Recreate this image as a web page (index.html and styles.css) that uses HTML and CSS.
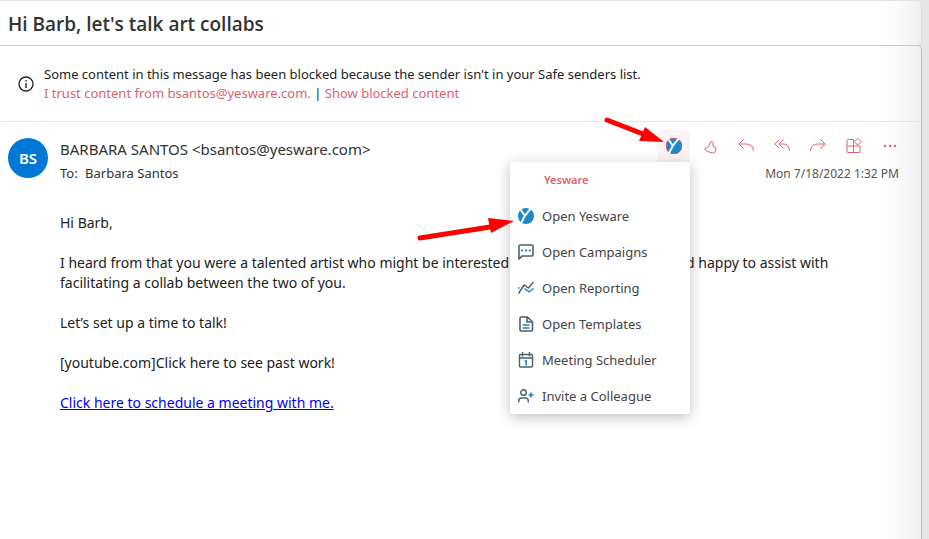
FILE: index.html
```html
<!DOCTYPE html>
<html lang="en">
<head>
    <meta charset="UTF-8">
    <meta name="viewport" content="width=device-width, initial-scale=1.0">
    <title>Hi Barb, let's talk art collabs</title>
    <link rel="stylesheet" href="styles.css">
</head>
<body>
    <svg class="sprite" aria-hidden="true">
        <symbol id="yesware" viewBox="0 0 16 16">
            <circle cx="8" cy="8" r="8" fill="#1c87c9"/>
            <path d="M2.8 2 L6.8 7.800 M12.6 0.6 L6.8 7.800 L3.2 15" fill="none" stroke="#fff" stroke-width="2"/>
        </symbol>
    </svg>

    <main class="reader">
        <header class="subject">
            <h1>Hi Barb, let's talk art collabs</h1>
        </header>

        <article class="message">
            <section class="notice">
                <svg class="info" viewBox="0 0 16 16" fill="none" stroke="#222">
                    <circle cx="8" cy="8" r="7" stroke-width="1.3"/>
                    <path d="M8 7v5M8 4v1.5" stroke-width="1.4"/>
                </svg>
                <div>
                    <p>Some content in this message has been blocked because the sender isn't in your Safe senders list.</p>
                    <p><a href="#trust">I trust content from bsantos@yesware.com.</a> | <a href="#show">Show blocked content</a></p>
                </div>
            </section>

            <section class="sender">
                <div class="avatar">BS</div>
                <div class="from">
                    <p class="name">BARBARA SANTOS &lt;bsantos@yesware.com&gt;</p>
                    <p class="to">To: <span>Barbara Santos</span></p>
                </div>
                <div class="meta">
                    <div class="toolbar">
                        <div class="addin">
                            <button class="tool active" aria-label="Yesware">
                                <svg viewBox="0 0 16 16"><use href="#yesware"/></svg>
                            </button>
                            <svg class="arrow arrow-top" viewBox="0 0 64 30">
                                <path d="M4 5 L40 19" stroke="#f00" stroke-width="5" stroke-linecap="round"/>
                                <path d="M42 12 L61 27 L36 26 Z" fill="#f00"/>
                            </svg>
                            <div class="menu">
                                <h2>Yesware</h2>
                                <button class="item">
                                    <svg viewBox="0 0 16 16"><use href="#yesware"/></svg>
                                    Open Yesware
                                </button>
                                <button class="item">
                                    <svg viewBox="0 0 16 16" fill="none" stroke="#4f5f66" stroke-width="1.6">
                                        <path d="M1 15V2q0-1 1-1h12q1 0 1 1v9q0 1-1 1H4z" stroke-linejoin="round"/>
                                        <path d="M3.2 6.5h2M7 6.5h2M10.8 6.5h2" stroke="#1c87d4" stroke-width="2"/>
                                    </svg>
                                    Open Campaigns
                                </button>
                                <button class="item">
                                    <svg viewBox="0 0 16 16" fill="none" stroke="#4f5f66" stroke-width="1.5">
                                        <path d="M0 8h1.5M3 8h1.5M6.5 8.5l4.5 3.3 4.5-3.3" stroke="#1c87d4"/>
                                        <path d="M.5 13.5L6 5l4.5 3L15.5 2"/>
                                    </svg>
                                    Open Reporting
                                </button>
                                <button class="item">
                                    <svg viewBox="0 0 16 16" fill="none" stroke="#4f5f66" stroke-width="1.6">
                                        <path d="M3 1h6.500l5 5v8q0 1-1 1H3q-1 0-1-1V2q0-1 1-1z" stroke-linejoin="round"/>
                                        <path d="M9 1v5h5"/>
                                        <path d="M4.500 9h7M4.500 12h7" stroke="#1c87d4"/>
                                    </svg>
                                    Open Templates
                                </button>
                                <button class="item">
                                    <svg viewBox="0 0 16 16" fill="none" stroke="#4f5f66" stroke-width="1.4">
                                        <rect x="1.500" y="2.500" width="13" height="12.500" rx="1"/>
                                        <path d="M1.500 6h13M4.500 0v4.500M11.500 0v4.500"/>
                                        <path d="M6.500 9h1.700v4.500" stroke="#1c87d4" stroke-width="1.600"/>
                                    </svg>
                                    Meeting Scheduler
                                </button>
                                <button class="item">
                                    <svg viewBox="0 0 16 16" fill="none" stroke="#4f5f66" stroke-width="1.4">
                                        <circle cx="5.500" cy="4.500" r="2.800"/>
                                        <path d="M.7 14.500v-1.500q0-3 3-3h3.600q3 0 3 3v1.500"/>
                                        <path d="M13 4.500v5M10.500 7h5" stroke="#1c87d4" stroke-width="1.600"/>
                                    </svg>
                                    Invite a Colleague
                                </button>
                                <svg class="arrow arrow-item" viewBox="0 0 100 28">
                                    <path d="M4 23 L74 12" stroke="#f00" stroke-width="5" stroke-linecap="round"/>
                                    <path d="M72 3 L98 6 L75 18 Z" fill="#f00"/>
                                </svg>
                            </div>
                        </div>
                        <button class="tool" aria-label="Like">
                            <svg viewBox="0 0 16 16">
                                <path d="M8.700 3.800q1.900-1 2.300.7v4l2 .3q1.200.3 1 1.500l-.9 3.400q-.5 1.600-2 1.400-4.400-.7-7.600-2.800-.9-.8-.5-1.900 2.200-.5 3.600-2.100 1.600-2.200 2.100-4.500z"/>
                            </svg>
                        </button>
                        <button class="tool" aria-label="Reply">
                            <svg viewBox="0 0 16 16"><path d="M5.500 1.500L1 6l4.500 4.500M1 6h7.500q6.500 0 7 7"/></svg>
                        </button>
                        <button class="tool" aria-label="Reply all">
                            <svg viewBox="0 0 16 16"><path d="M5.500 1.500L1 6l4.500 4.500M9.500 1.500L5 6l4.500 4.500M5 6h4.500q5.500 0 6 7"/></svg>
                        </button>
                        <button class="tool" aria-label="Forward">
                            <svg viewBox="0 0 16 16"><path d="M10.500 1.500L15 6l-4.500 4.500M15 6H7.500Q1 6 .5 13"/></svg>
                        </button>
                        <button class="tool" aria-label="Apps">
                            <svg viewBox="0 0 16 16"><path d="M7.500 1.500H2q-1 0-1 1v11q0 1 1 1h11q1 0 1-1V8H1M7.500 1.500v13M11.700.3l3.400 3.400-3.400 3.400-3.400-3.400z" stroke-linejoin="round"/></svg>
                        </button>
                        <button class="tool more" aria-label="More actions">
                            <svg viewBox="0 0 16 16"><circle cx="3" cy="8" r="1.200"/><circle cx="8" cy="8" r="1.200"/><circle cx="13" cy="8" r="1.200"/></svg>
                        </button>
                    </div>
                    <time datetime="2022-07-18T13:32">Mon 7/18/2022 1:32 PM</time>
                </div>
            </section>

            <section class="body">
                <p>Hi Barb,</p>
                <p>I heard from that you were a talented artist who might be interested<span class="gap"></span>d happy to assist with facilitating a collab between the two of you.</p>
                <p>Let’s set up a time to talk!</p>
                <p>[youtube.com]Click here to see past work!</p>
                <p><a href="#schedule">Click here to schedule a meeting with me.</a></p>
            </section>
        </article>
    </main>
</body>
</html>
```
FILE: styles.css
```css
* {
    box-sizing: border-box;
}
body {
    margin: 0;
    padding-right: 7px;
    background-color: #e6e6e6;
    color: #222;
    font-family: "Segoe UI", "Noto Sans", sans-serif;
    font-size: 13px;
}
h1, h2, p {
    margin: 0;
}
button {
    border: 0;
    padding: 0;
    background: none;
    font: inherit;
    color: inherit;
}
.sprite {
    display: none;
}
.reader {
    display: flex;
    flex-direction: column;
    min-height: 100vh;
}
.subject, .message {
    background: linear-gradient(to left, #efefef, #f9f9f9 20px, #fff 44px);
    border-right: 1px solid #bbb;
}
.subject {
    padding: 9px 8px 7px;
    border-top: 1px solid #e3e3e3;
    border-right-color: #ddd;
    border-bottom: 1px solid #c8c8c8;
    border-radius: 0 6px 4px 0;
}
.subject h1 {
    font-family: "Segoe UI", "Open Sans", sans-serif;
    font-size: 19px;
    font-weight: 600;
    line-height: 28px;
    color: #333;
}
.message {
    flex: 1;
    border-top-right-radius: 4px;
}

/* blocked content notice */
.notice {
    display: flex;
    align-items: center;
    gap: 10px;
    padding: 19px 18px 18px;
    border-bottom: 1px solid #e5e5e5;
    line-height: 19px;
}
.notice a {
    color: #dc626d;
    text-decoration: none;
}
.info {
    width: 16px;
    height: 16px;
}

/* sender row */
.sender {
    display: flex;
    padding: 8px 15px 0 8px;
}
.avatar {
    width: 40px;
    height: 40px;
    margin-top: 8px;
    border-radius: 50%;
    background-color: #0078d7;
    color: #fff;
    font-size: 15px;
    font-weight: 600;
    line-height: 40px;
    text-align: center;
}
.from {
    flex: 1;
    padding: 7px 0 0 12px;
    color: #333;
}
.name {
    font-size: 15px;
    line-height: 24px;
}
.to {
    font-size: 13px;
    line-height: 24px;
}
.to span {
    margin-left: 4px;
}
.meta time {
    display: block;
    padding-right: 7px;
    color: #555;
    font-size: 12px;
    line-height: 24px;
    text-align: right;
}
.toolbar {
    display: flex;
    gap: 4px;
}
.tool {
    display: flex;
    align-items: center;
    justify-content: center;
    width: 32px;
    height: 32px;
}
.tool svg {
    width: 16px;
    height: 16px;
    fill: none;
    stroke: #dc626d;
}
.tool.active {
    background-color: #fdf3f4;
}
.tool.more svg {
    fill: #dc626d;
    stroke: none;
}

/* add-in menu */
.addin {
    position: relative;
}
.menu {
    position: absolute;
    top: 32px;
    right: 0;
    width: 180px;
    background-color: #fff;
    border-radius: 2px;
    box-shadow: 0 3px 14px rgba(0, 0, 0, 0.25);
}
.menu h2 {
    padding-left: 34px;
    color: #dc626d;
    font-size: 11px;
    font-weight: 600;
    line-height: 36px;
}
.item {
    display: flex;
    align-items: center;
    gap: 8px;
    width: 100%;
    height: 36px;
    padding-left: 8px;
    color: #444;
}
.item svg {
    width: 16px;
    height: 16px;
}
.arrow {
    position: absolute;
    fill: none;
}
.arrow-top {
    top: -15px;
    left: -55px;
    width: 64px;
    height: 30px;
}
.arrow-item {
    top: 53px;
    left: -94px;
    width: 100px;
    height: 28px;
}

/* mail text */
.body {
    padding: 27px 60px;
    font-size: 14px;
    line-height: 20px;
}
.body p {
    margin-bottom: 20px;
}
.body a {
    color: #00e;
}
.gap {
    display: inline-block;
    width: 177px;
}
```
